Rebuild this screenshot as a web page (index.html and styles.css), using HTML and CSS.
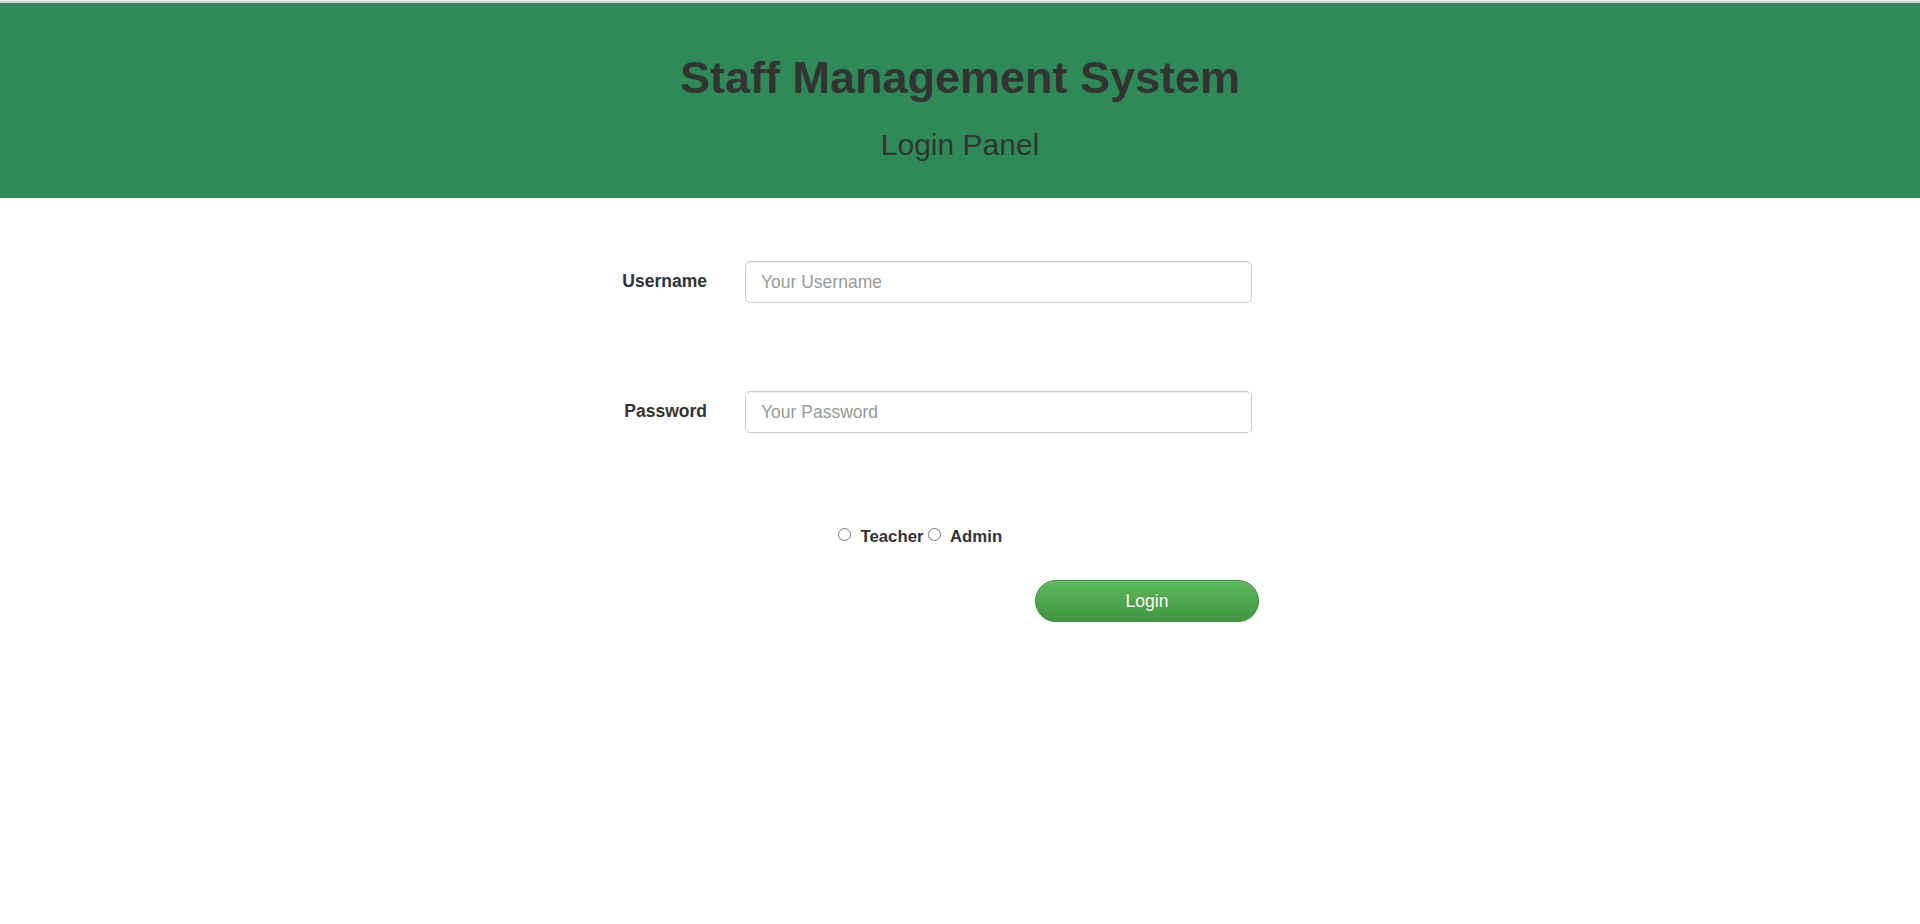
FILE: index.html
```html
<!DOCTYPE html>
<html lang="en">
<head>
<meta charset="utf-8">
<title>Staff Management System - Login</title>
<link rel="stylesheet" href="styles.css">
</head>
<body>
<div class="topline"></div>
<header class="banner">
  <h1 class="banner-title">Staff Management System</h1>
  <h3 class="banner-sub">Login Panel</h3>
</header>
<main class="login">
  <form class="login-form">
    <div class="form-row">
      <label class="form-label" for="username">Username</label>
      <input class="form-field" id="username" type="text" placeholder="Your Username">
    </div>
    <div class="form-row form-row-second">
      <label class="form-label" for="password">Password</label>
      <input class="form-field" id="password" type="password" placeholder="Your Password">
    </div>
    <div class="roles">
      <input class="role-radio" type="radio" name="role" id="teacher" value="teacher">
      <label class="role-label" for="teacher">Teacher</label>
      <input class="role-radio" type="radio" name="role" id="admin" value="admin">
      <label class="role-label" for="admin">Admin</label>
    </div>
    <div class="actions">
      <button class="btn-login" type="button">Login</button>
    </div>
  </form>
</main>
</body>
</html>
```

FILE: styles.css
```css
html, body {
  margin: 0;
  padding: 0;
  background: #ffffff;
}

body {
  font-family: "Liberation Sans", Arial, Helvetica, sans-serif;
  font-size: 17.5px;
  line-height: 25px;
  color: #333333;
}

.topline {
  height: 2px;
  border-top: 1px solid #ececec;
  background: #cfcfcf;
}

.banner {
  background: #2e8b57;
  padding: 25px 0 24.5px;
  text-align: center;
  color: #333333;
}

.banner-title {
  margin: 25px 0 12.5px;
  font-size: 45px;
  line-height: 49.5px;
  font-weight: 700;
}

.banner-sub {
  margin: 25px 0 12.5px;
  font-size: 30px;
  line-height: 33px;
  font-weight: 400;
}

.login {
  padding-top: 63.5px;
}

.login-form {
  width: 659px;
  margin-left: 600px;
}

.form-row {
  display: flex;
  align-items: flex-start;
  height: 42px;
}

.form-row-second {
  margin-top: 88px;
}

.form-label {
  width: 107px;
  margin-right: 38px;
  padding-top: 7.5px;
  text-align: right;
  font-weight: 700;
  color: #333333;
}

.form-field {
  box-sizing: border-box;
  width: 507px;
  height: 42px;
  padding: 0 15px;
  border: 1px solid #cccccc;
  border-radius: 5px;
  box-shadow: inset 0 1px 1px rgba(0, 0, 0, 0.075);
  font-family: "Liberation Sans", Arial, Helvetica, sans-serif;
  font-size: 17.5px;
  color: #555555;
  background: #ffffff;
  outline: none;
}

.form-field::placeholder {
  color: #999999;
}

.roles {
  display: flex;
  align-items: center;
  margin-top: 91px;
  padding-left: 238px;
  height: 25px;
  font-size: 16.75px;
}

.role-radio {
  width: 13px;
  height: 13px;
  margin: 0 9.5px 0 0;
  position: relative;
  top: -2px;
}

.role-label {
  font-weight: 700;
  margin-right: 4px;
  color: #333333;
}

.actions {
  display: flex;
  justify-content: flex-end;
  margin-top: 31px;
}

.btn-login {
  box-sizing: border-box;
  width: 224px;
  height: 42px;
  border: 1px solid #3e8f3e;
  border-radius: 21px;
  background-color: #4cae4c;
  background-image: linear-gradient(to bottom, #5cb85c 0%, #419641 100%);
  box-shadow: inset 0 1px 0 rgba(255, 255, 255, 0.15), 0 1px 1px rgba(0, 0, 0, 0.075);
  color: #ffffff;
  font-family: "Liberation Sans", Arial, Helvetica, sans-serif;
  font-size: 17.5px;
  line-height: 25px;
  text-shadow: 0 -1px 0 rgba(0, 0, 0, 0.2);
  padding: 0;
  cursor: pointer;
}
```
